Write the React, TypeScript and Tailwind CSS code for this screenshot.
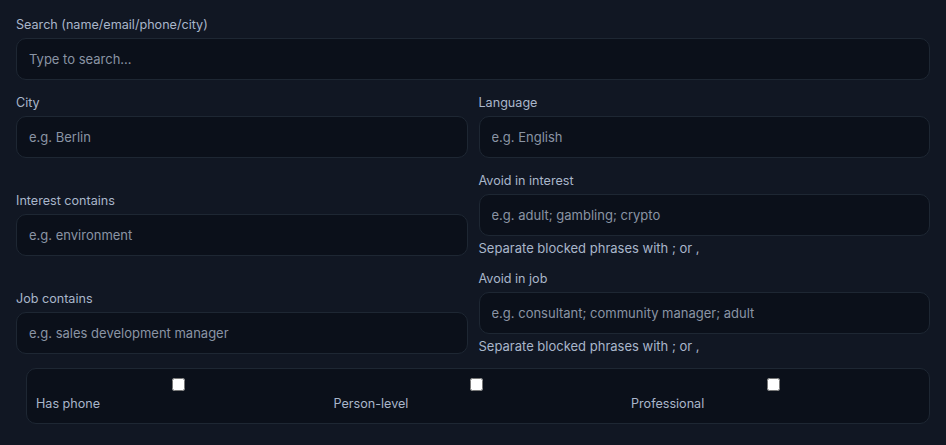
import type { ReactNode } from 'react'

const inputCls =
  'block w-full h-[42px] rounded-[10px] border border-[#1e2733] bg-[#0b101a] px-3 text-[13px] text-[#d1d9e6] placeholder:text-[#8a94a4] outline-none'

function Field({ label, placeholder, hint }: { label: string; placeholder: string; hint?: string }) {
  return (
    <div className="flex flex-col">
      <label className="mb-1 text-[12.6px] leading-[18px] text-[#a9b6ca]">{label}</label>
      <input className={inputCls} placeholder={placeholder} />
      {hint && <p className="mt-1 text-[13px] leading-4 text-[#a9b6ca]">{hint}</p>}
    </div>
  )
}

function Row({ children }: { children: ReactNode }) {
  return <div className="grid grid-cols-2 items-end gap-x-[11px]">{children}</div>
}

function Check({ label }: { label: string }) {
  return (
    <label className="flex flex-col">
      <input type="checkbox" className="h-[13px] w-[13px] self-center" />
      <span className="mt-[5px] text-[12.6px] leading-4 text-[#a9b6ca]">{label}</span>
    </label>
  )
}

export default function App() {
  return (
    <div
      className="min-h-[445px] bg-[#111723] px-4 pt-4 pb-5"
      style={{ fontFamily: 'Inter, "Noto Sans", sans-serif' }}
    >
      <div className="flex flex-col gap-[14px]">
        <Field label="Search (name/email/phone/city)" placeholder="Type to search..." />

        <Row>
          <Field label="City" placeholder="e.g. Berlin" />
          <Field label="Language" placeholder="e.g. English" />
        </Row>

        <Row>
          <Field label="Interest contains" placeholder="e.g. environment" />
          <Field
            label="Avoid in interest"
            placeholder="e.g. adult; gambling; crypto"
            hint="Separate blocked phrases with ; or ,"
          />
        </Row>

        <Row>
          <Field label="Job contains" placeholder="e.g. sales development manager" />
          <Field
            label="Avoid in job"
            placeholder="e.g. consultant; community manager; adult"
            hint="Separate blocked phrases with ; or ,"
          />
        </Row>

        {/* Flags */}
        <div className="ml-[10px] grid grid-cols-[285px_285px_285px] gap-x-[12.5px] rounded-[10px] border border-[#1e2733] bg-[#0b101a] px-[9px] pt-[9px] pb-[11px]">
          <Check label="Has phone" />
          <Check label="Person-level" />
          <Check label="Professional" />
        </div>
      </div>
    </div>
  )
}
